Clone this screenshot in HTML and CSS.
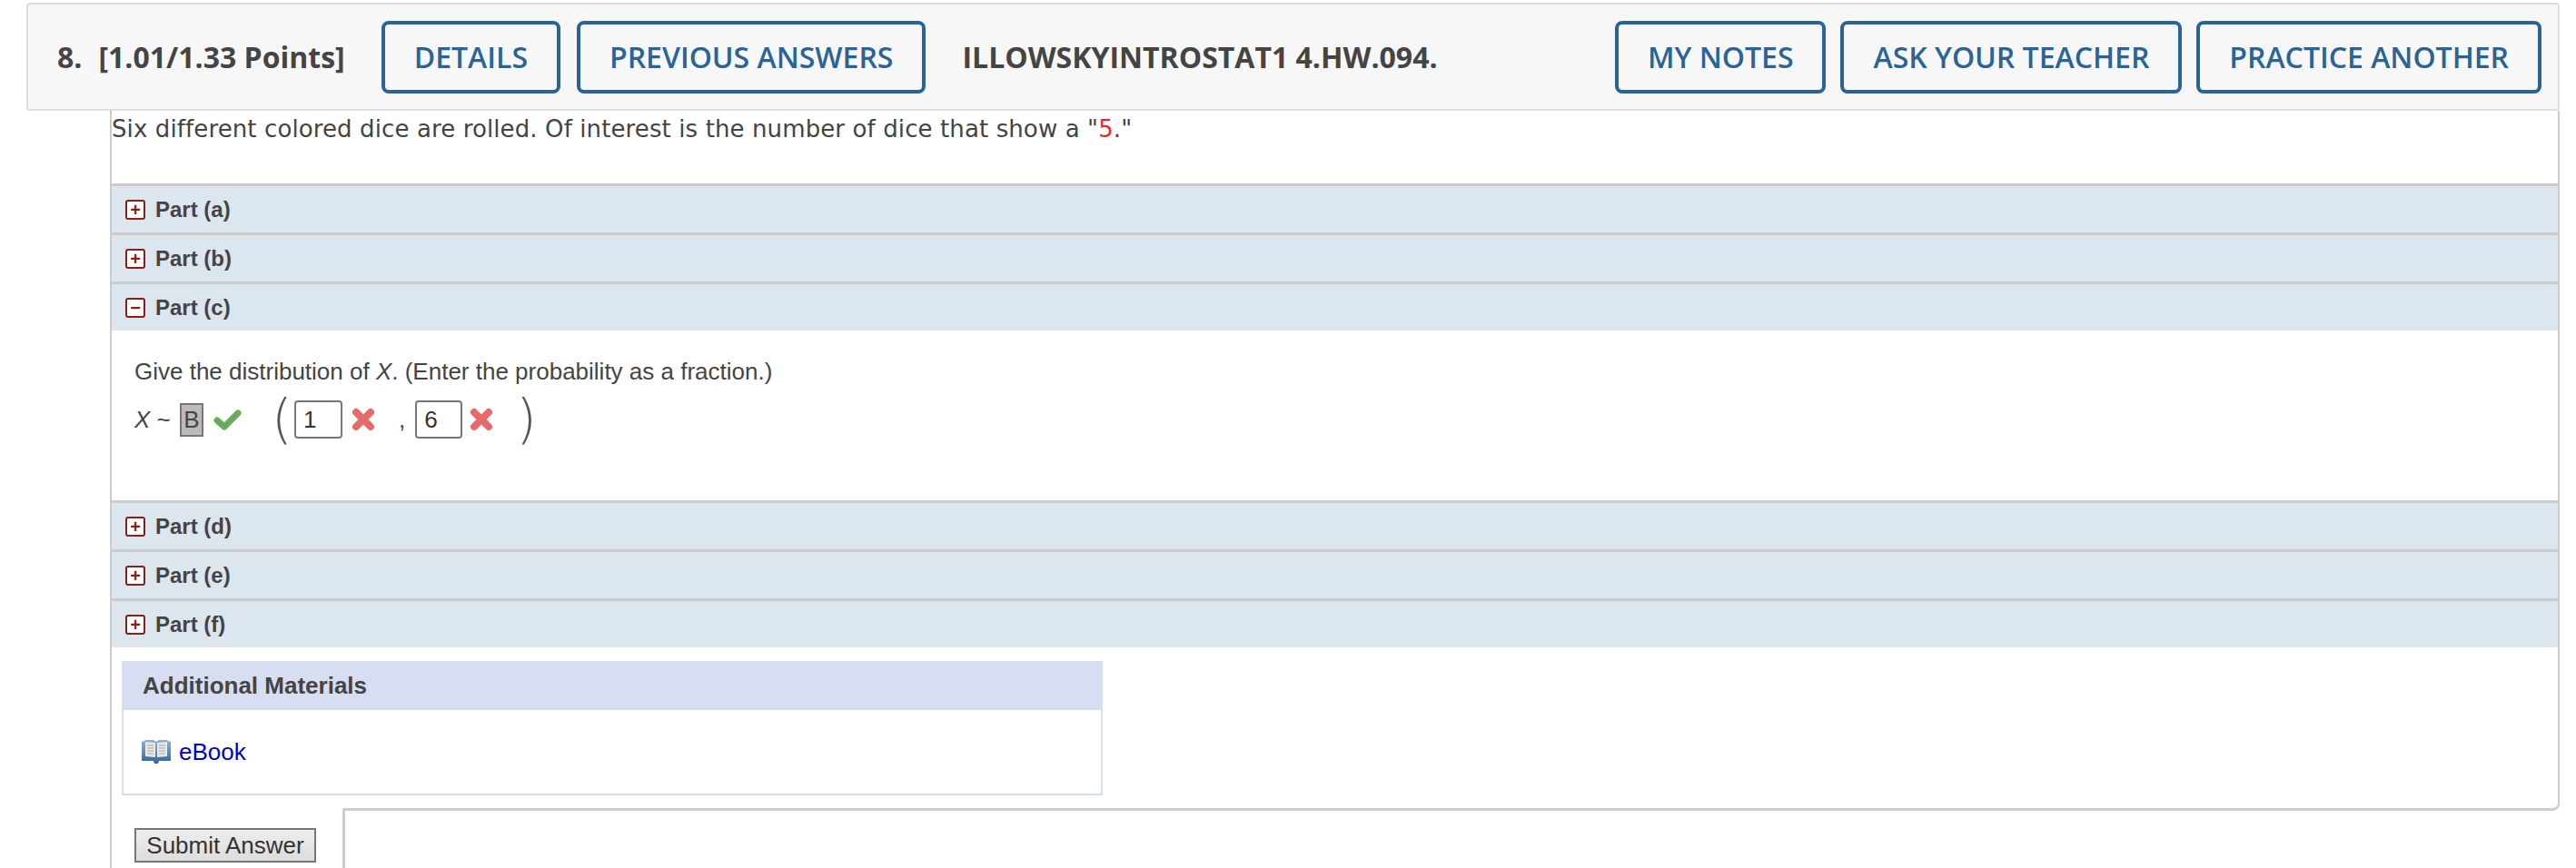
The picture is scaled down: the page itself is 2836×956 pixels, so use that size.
FILE: index.html
```html
<!DOCTYPE html>
<html lang="en">
<head>
    <meta charset="UTF-8">
    <title>Question 8</title>
    <link rel="stylesheet" href="styles.css">
</head>
<body>
    <header class="q-header">
        <span class="q-num">8.</span>
        <span class="q-points">[1.01/1.33 Points]</span>
        <a class="q-btn q-btn-first">DETAILS</a>
        <a class="q-btn">PREVIOUS ANSWERS</a>
        <span class="q-code">ILLOWSKYINTROSTAT1 4.HW.094.</span>
        <div class="q-actions">
            <a class="q-btn">MY NOTES</a>
            <a class="q-btn">ASK YOUR TEACHER</a>
            <a class="q-btn">PRACTICE ANOTHER</a>
        </div>
    </header>

    <div class="question">
        <div class="q-body">
            <p class="q-text">Six different colored dice are rolled. Of interest is the number of dice that show a "<span class="red">5</span>."</p>

            <div class="part"><span class="toggle">+</span>Part (a)</div>
            <div class="part"><span class="toggle">+</span>Part (b)</div>
            <div class="part"><span class="toggle">&minus;</span>Part (c)</div>

            <div class="part-content">
                <p class="prompt">Give the distribution of <i>X</i>. (Enter the probability as a fraction.)</p>
                <div class="answer-line">
                    <span class="var"><i>X</i> ~</span>
                    <span class="select-b">B</span>
                    <svg class="mark check" width="32" height="26" viewBox="0 0 32 26">
                        <path d="M4 14 L12 21 L27 6" fill="none" stroke="#6aaa5c" stroke-width="7" stroke-linejoin="round" stroke-linecap="round"/>
                    </svg>
                    <span class="paren paren-open">(</span>
                    <span class="num-input">1</span>
                    <svg class="mark cross" width="26" height="26" viewBox="0 0 26 26">
                        <path d="M5 5 L21 21 M21 5 L5 21" fill="none" stroke="#e56a6a" stroke-width="8" stroke-linecap="round"/>
                    </svg>
                    <span class="comma">,</span>
                    <span class="num-input">6</span>
                    <svg class="mark cross" width="26" height="26" viewBox="0 0 26 26">
                        <path d="M5 5 L21 21 M21 5 L5 21" fill="none" stroke="#e56a6a" stroke-width="8" stroke-linecap="round"/>
                    </svg>
                    <span class="paren paren-close">)</span>
                </div>
            </div>

            <div class="part"><span class="toggle">+</span>Part (d)</div>
            <div class="part"><span class="toggle">+</span>Part (e)</div>
            <div class="part"><span class="toggle">+</span>Part (f)</div>

            <div class="materials">
                <div class="materials-head">Additional Materials</div>
                <div class="materials-body">
                    <svg width="32" height="28" viewBox="0 0 32 28">
                        <defs>
                            <linearGradient id="bookBlue" x1="0" y1="0" x2="0" y2="1">
                                <stop offset="0" stop-color="#8db4d6"/>
                                <stop offset="1" stop-color="#2f6496"/>
                            </linearGradient>
                        </defs>
                        <path d="M0 3 L5 1 L13 1 L16 3 L19 1 L27 1 L32 3 L32 24 L19 24 L18 27 L14 27 L13 24 L0 24 Z" fill="url(#bookBlue)"/>
                        <path d="M4 3 L15 4 L15 20 L4 19 Z M17 4 L28 3 L28 19 L17 20 Z" fill="#e9e9e6"/>
                        <path d="M6 7 H13 M6 10 H13 M6 13 H13 M6 16 H13 M19 7 H26 M19 10 H26 M19 13 H26 M19 16 H26" stroke="#bcbcbc" stroke-width="1.5"/>
                    </svg>
                    <a class="ebook">eBook</a>
                </div>
            </div>
        </div>

        <div class="submit-row">
            <div class="submit-cell"><button class="submit">Submit Answer</button></div>
            <div class="submit-rest"></div>
        </div>
    </div>
</body>
</html>
```

FILE: styles.css
```css
body {
    margin: 0;
    height: 956px;
    overflow: hidden;
    background-color: #fff;
    color: #444;
    font-family: 'Liberation Sans', Arial, sans-serif;
    font-size: 26px;
}

.q-header {
    display: flex;
    align-items: center;
    box-sizing: border-box;
    height: 119px;
    margin: 3px 18px 0 29px;
    padding: 0 18px 0 32px;
    background-color: #f7f7f7;
    border: 2px solid #ddd;
    border-radius: 4px;
    font-family: 'Open Sans', sans-serif;
    font-size: 32px;
    font-weight: 700;
}

.q-points {
    margin-left: 18px;
    margin-right: 40px;
}

.q-btn {
    display: flex;
    align-items: center;
    box-sizing: border-box;
    height: 80px;
    margin-right: 18px;
    padding: 0 32px;
    border: 4px solid #2a6496;
    border-radius: 8px;
    color: #2a6496;
    font-size: 32px;
    font-weight: 600;
}

.q-code {
    margin-left: 22px;
}

.q-actions {
    display: flex;
    margin-left: auto;
}

.q-actions .q-btn {
    margin-right: 16px;
}

.q-actions .q-btn:last-child {
    margin-right: 0;
}

.question {
    margin-left: 121px;
    border-left: 2px solid #ccc;
}

.q-body {
    margin-right: 18px;
    border-right: 2px solid #ccc;
    border-bottom: 3px solid #ccc;
    border-bottom-right-radius: 8px;
    height: 771px;
    box-sizing: border-box;
}

.q-text {
    box-sizing: border-box;
    height: 80px;
    margin: 0;
    padding-top: 2px;
    font-family: 'DejaVu Sans', Verdana, sans-serif;
    font-size: 26px;
    letter-spacing: 0.11px;
    line-height: 36px;
}

.red {
    color: #e22c2c;
}

.part {
    display: flex;
    align-items: center;
    box-sizing: border-box;
    height: 54px;
    padding-left: 15px;
    background-color: #dce6ef;
    border-top: 3px solid #ccc;
    font-size: 24px;
    font-weight: 700;
}

.toggle {
    display: flex;
    align-items: center;
    justify-content: center;
    box-sizing: border-box;
    width: 22px;
    height: 22px;
    margin-right: 11px;
    background-color: #fff;
    border: 2px solid #8a1f17;
    border-radius: 3px;
    color: #8a1f17;
    font-size: 20px;
    line-height: 1;
}

.part-content {
    box-sizing: border-box;
    height: 187px;
    padding: 27px 0 0 25px;
}

.prompt {
    margin: 0;
    line-height: 36px;
}

.answer-line {
    display: flex;
    align-items: center;
    height: 60px;
    margin-top: 5px;
}

.var {
    width: 50px;
}

.select-b {
    box-sizing: border-box;
    width: 26px;
    height: 37px;
    background-color: #bbb;
    border: 2px solid #777;
    text-align: center;
    line-height: 33px;
}

.check {
    margin-left: 11px;
}

.paren {
    color: #555;
    font-family: 'DejaVu Sans', sans-serif;
    font-size: 58px;
    font-weight: 200;
    line-height: 60px;
}

.paren-open {
    width: 25px;
    margin-left: 32px;
}

.num-input {
    box-sizing: border-box;
    width: 53px;
    height: 42px;
    padding-left: 8px;
    background-color: #fff;
    border: 2px solid #777;
    border-radius: 4px;
    color: #333;
    line-height: 38px;
}

.cross {
    margin-left: 10px;
}

.comma {
    margin-left: 26px;
    margin-right: 11px;
}

.comma ~ .num-input {
    width: 52px;
}

.comma ~ .cross {
    margin-left: 8px;
}

.paren-close {
    margin-left: 25px;
}

.materials {
    box-sizing: border-box;
    width: 1080px;
    height: 148px;
    margin: 15px 0 0 11px;
    border: 2px solid #d8def2;
    border-top: 0;
}

.materials-head {
    box-sizing: border-box;
    height: 54px;
    margin: 0 -2px;
    padding-left: 23px;
    background-color: #d8def2;
    font-weight: 700;
    line-height: 54px;
}

.materials-body {
    display: flex;
    align-items: center;
    height: 92px;
    padding-left: 20px;
}

.ebook {
    margin-left: 9px;
    color: #0000cc;
}

.submit-row {
    display: flex;
    height: 68px;
    margin-top: -3px;
    margin-right: 18px;
}

.submit-cell {
    box-sizing: border-box;
    width: 254px;
    padding: 22px 0 0 25px;
    background-color: #fff;
}

.submit {
    box-sizing: border-box;
    width: 200px;
    height: 38px;
    padding: 0;
    background: linear-gradient(#eee, #ddd);
    border: 2px solid #777;
    border-radius: 0;
    color: #333;
    font-family: 'Liberation Sans', Arial, sans-serif;
    font-size: 26px;
    line-height: 32px;
}

.submit-rest {
    flex: 1;
    border-left: 3px solid #ccc;
}
```
